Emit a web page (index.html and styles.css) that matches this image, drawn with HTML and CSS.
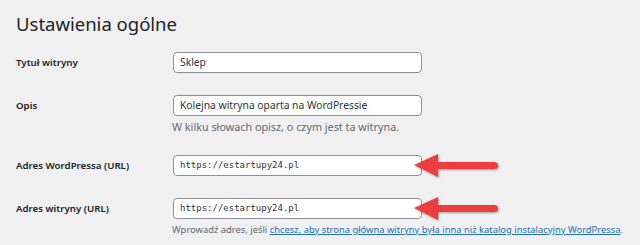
FILE: index.html
```html
<!DOCTYPE html>
<html lang="pl">
<head>
<meta charset="utf-8">
<title>Ustawienia ogólne</title>
<link rel="stylesheet" href="styles.css">
</head>
<body>
<div class="wrap">
  <h1 class="title">Ustawienia ogólne</h1>
  <div class="form">
    <div class="row">
      <div class="label">Tytuł witryny</div>
      <div class="field"><div class="input">Sklep</div></div>
    </div>
    <div class="row row-desc">
      <div class="label">Opis</div>
      <div class="field">
        <div class="input">Kolejna witryna oparta na WordPressie</div>
        <p class="help help-desc">W kilku słowach opisz, o czym jest ta witryna.</p>
      </div>
    </div>
    <div class="row">
      <div class="label">Adres WordPressa (URL)</div>
      <div class="field">
        <div class="input mono">https://estartupy24.pl</div>
        <svg class="arrow" width="90" height="26" viewBox="0 0 90 26"><path d="M1 12 L25 1 L25 9 L81 9 Q85 9 85 12.5 Q85 16 81 16 L25 16 L25 24 Z" fill="#ee3d3f" style="filter:drop-shadow(1px 1px 1px rgba(0,0,0,.35))"/></svg>
      </div>
    </div>
    <div class="row row-last">
      <div class="label">Adres witryny (URL)</div>
      <div class="field">
        <div class="input mono">https://estartupy24.pl</div>
        <svg class="arrow" width="90" height="26" viewBox="0 0 90 26"><path d="M1 12 L25 1 L25 9 L81 9 Q85 9 85 12.5 Q85 16 81 16 L25 16 L25 24 Z" fill="#ee3d3f" style="filter:drop-shadow(1px 1px 1px rgba(0,0,0,.35))"/></svg>
        <p class="help help-url">Wprowadź adres, jeśli <a href="#">chcesz, aby strona główna witryny była inna niż katalog instalacyjny WordPressa</a>.</p>
      </div>
    </div>
  </div>
</div>
</body>
</html>
```
FILE: styles.css
```css
html, body {
  margin: 0;
  padding: 0;
  background: #f0f0f1;
}
body {
  font-family: "Noto Sans", "Open Sans", sans-serif;
  color: #1d2327;
  width: 640px;
  height: 245px;
  overflow: hidden;
}
.wrap {
  padding: 11px 0 0 16px;
}
.title {
  margin: 0;
  font-size: 18.5px;
  font-weight: 400;
  line-height: 26px;
  color: #1d2327;
}
.form {
  display: flex;
  flex-direction: column;
  margin-top: 15px;
}
.row {
  display: flex;
  align-items: flex-start;
  margin-bottom: 22px;
}
.row-desc {
  margin-bottom: 21px;
}
.row-last {
  margin-bottom: 0;
}
.label {
  width: 157px;
  flex: none;
  height: 21px;
  line-height: 21px;
  font-size: 9.7px;
  font-weight: 600;
  color: #1d2327;
}
.field {
  position: relative;
  flex: none;
  width: 249px;
}
.input {
  box-sizing: border-box;
  height: 21px;
  width: 249px;
  background: #fff;
  border: 1px solid #8c8f94;
  border-radius: 4px;
  padding: 0 6px;
  font-size: 10.3px;
  line-height: 19px;
  color: #2c3338;
  white-space: nowrap;
}
.mono {
  font-family: "DejaVu Sans Mono", "Liberation Mono", monospace;
  font-size: 9px;
}
.help {
  margin: 4px 0 0 -1px;
  line-height: 14px;
  color: #646970;
  white-space: nowrap;
}
.help-desc {
  font-size: 10.8px;
}
.help-url {
  font-size: 9.4px;
}
.help a {
  color: #2271b1;
}
.arrow {
  position: absolute;
  left: 240px;
  top: -2px;
}
```
